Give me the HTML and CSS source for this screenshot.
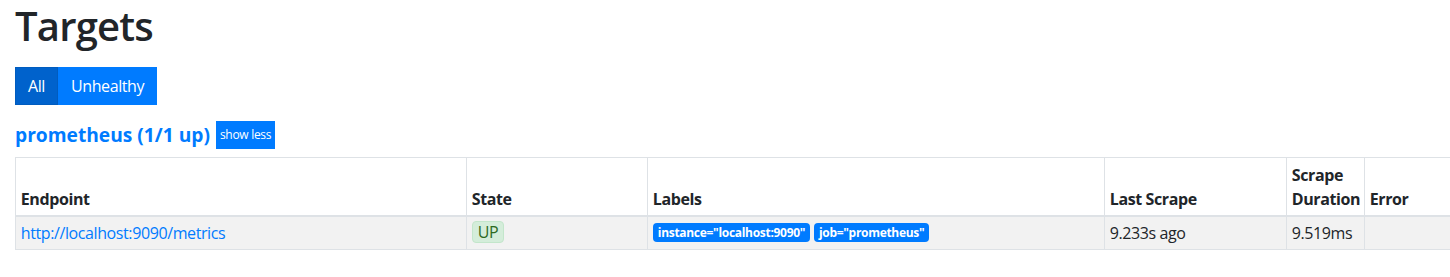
FILE: index.html
```html
<!DOCTYPE html>
<html lang="en">

<head>
    <meta charset="UTF-8">
    <meta name="viewport" content="width=device-width, initial-scale=1.0">
    <title>Targets</title>
    <link rel="stylesheet" href="styles.css">
</head>

<body>
    <main class="container">
        <h1 class="page-title">Targets</h1>

        <div class="btn-group">
            <button class="btn btn-active">All</button>
            <button class="btn">Unhealthy</button>
        </div>

        <div class="pool-header">
            <a class="pool-title" href="#">prometheus (1/1 up)</a>
            <button class="btn-small">show less</button>
        </div>

        <table class="targets">
            <colgroup>
                <col class="col-endpoint">
                <col class="col-state">
                <col class="col-labels">
                <col class="col-last">
                <col class="col-duration">
                <col class="col-error">
            </colgroup>
            <thead>
                <tr>
                    <th>Endpoint</th>
                    <th>State</th>
                    <th>Labels</th>
                    <th>Last Scrape</th>
                    <th>Scrape Duration</th>
                    <th>Error</th>
                </tr>
            </thead>
            <tbody>
                <tr>
                    <td><a href="#">http://localhost:9090/metrics</a></td>
                    <td><span class="state-up">UP</span></td>
                    <td><span class="label-badge">instance="localhost:9090"</span> <span class="label-badge">job="prometheus"</span></td>
                    <td>9.233s ago</td>
                    <td>9.519ms</td>
                    <td></td>
                </tr>
            </tbody>
        </table>
    </main>
</body>

</html>
```

FILE: styles.css
```css
/* Basic reset */
* {
    margin: 0;
    padding: 0;
    box-sizing: border-box;
}

body {
    font-family: "Open Sans", "Noto Sans", sans-serif;
    font-size: 16px;
    line-height: 1.5;
    letter-spacing: -0.4px;
    color: #212529;
    background-color: #fff;
    overflow: hidden;
}

a {
    color: #007bff;
    text-decoration: none;
}

.container {
    padding: 0 15px;
}

.page-title {
    font-size: 40px;
    font-weight: 600;
    line-height: 48px;
    letter-spacing: -0.8px;
    padding-top: 2px;
    margin-bottom: 17px;
}

.btn-group {
    display: flex;
}

.btn {
    font-family: inherit;
    font-size: 16px;
    line-height: 24px;
    letter-spacing: inherit;
    padding: 6px 12px;
    color: #fff;
    background-color: #007bff;
    border: 1px solid #007bff;
    cursor: pointer;
}

.btn-active {
    background-color: #0062cc;
    border-color: #005cbf;
}

.pool-header {
    display: flex;
    align-items: center;
    gap: 6px;
    margin-top: 16px;
    margin-bottom: 8px;
}

.pool-title {
    font-size: 19.2px;
    font-weight: 700;
    line-height: 28px;
    letter-spacing: 0;
}

.btn-small {
    font-family: inherit;
    font-size: 12px;
    line-height: 18px;
    letter-spacing: -0.3px;
    padding: 5px 4px;
    color: #fff;
    background-color: #007bff;
    border: none;
    cursor: pointer;
}

.targets {
    border-collapse: collapse;
    table-layout: fixed;
    width: 1651px;
}

.col-endpoint { width: 451px; }
.col-state { width: 181px; }
.col-labels { width: 457px; }
.col-last { width: 182px; }
.col-duration { width: 78px; }
.col-error { width: 302px; }

.targets th,
.targets td {
    line-height: 24px;
    border: 1px solid #dee2e6;
    text-align: left;
}

.targets th {
    padding: 4.5px 4.8px;
    font-weight: 700;
    vertical-align: bottom;
    border-bottom: 2px solid #dee2e6;
}

.targets td {
    padding: 4px 4.8px;
    vertical-align: top;
}

.targets tbody tr {
    background-color: #f2f2f2;
}

.state-up {
    display: inline-block;
    vertical-align: top;
    padding: 0 5px;
    line-height: 20px;
    color: #2d6a1f;
    background-color: #d4edda;
    border: 1px solid #c3e6cb;
    border-radius: 4px;
}

.label-badge {
    display: inline-block;
    vertical-align: top;
    margin-top: 2px;
    font-size: 12px;
    font-weight: 700;
    line-height: 13px;
    letter-spacing: -0.3px;
    padding: 3px 5px;
    color: #fff;
    background-color: #007bff;
    border-radius: 4px;
}
```
